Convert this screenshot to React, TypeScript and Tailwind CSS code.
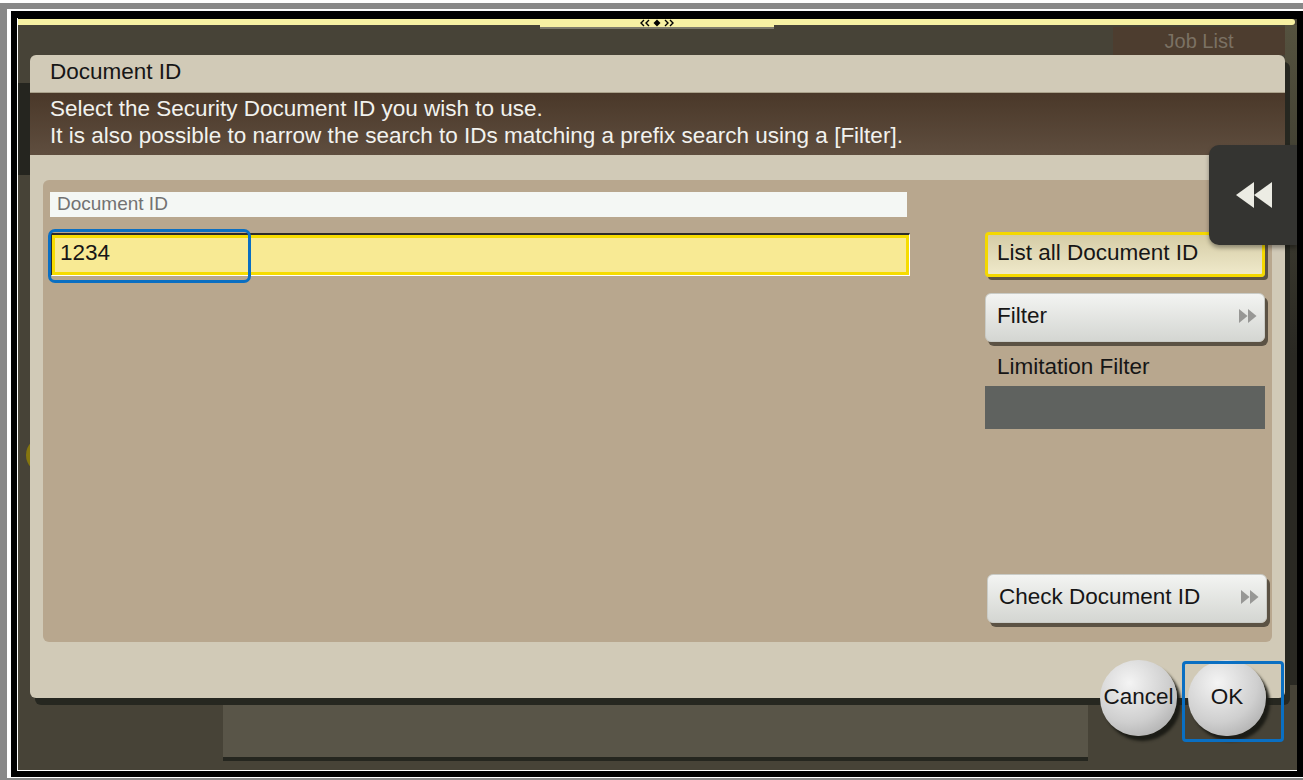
import React from 'react'

function DoubleArrow() {
  return (
    <svg width="20" height="16" viewBox="0 0 20 16" className="shrink-0">
      <polygon points="1,1 9.5,8 1,15" fill="#979795" />
      <polygon points="10,1 18.5,8 10,15" fill="#979795" />
    </svg>
  )
}

function RewindIcon() {
  return (
    <svg width="38" height="26" viewBox="0 0 38 26">
      <polygon points="19,0 19,26 1,13" fill="#ecece4" />
      <polygon points="37,0 37,26 19,13" fill="#ecece4" />
    </svg>
  )
}

function HandleIcon() {
  return (
    <svg width="36" height="8" viewBox="0 0 36 8">
      <g fill="none" stroke="#000" strokeWidth="1.4">
        <polyline points="5,1 2,4 5,7" />
        <polyline points="10,1 7,4 10,7" />
        <polyline points="26,1 29,4 26,7" />
        <polyline points="31,1 34,4 31,7" />
      </g>
      <polygon points="18,0.5 21.5,4 18,7.5 14.5,4" fill="#000" />
    </svg>
  )
}

function PanelButton({ label, arrow = false }: { label: string; arrow?: boolean }) {
  return (
    <div className="flex h-[49px] w-[280px] items-center justify-between rounded-[6px] border border-[#c9cbc6] bg-gradient-to-b from-[#f3f4f2] to-[#d4d6d2] pb-[4px] pl-[11px] pr-[6px] shadow-[3px_4px_0_#5b5244]">
      <span>{label}</span>
      {arrow && <DoubleArrow />}
    </div>
  )
}

export default function App() {
  return (
    <div className="h-[780px] w-[1303px] overflow-hidden border-t-[3px] border-white bg-[#888888] pb-[2px] pl-[7px] pt-[6px] font-['Liberation_Sans',Arial,sans-serif] text-[22.5px] text-[#161616]">
      <div className="h-full border-b border-l-[4px] border-t-[2px] border-white bg-black pb-[6px] pl-[6px] pr-[6px] pt-[7px]">
        <div className="relative flex h-full flex-col overflow-hidden border-b border-l border-white bg-[#474337]">
          {/* top strip */}
          <div className="flex h-[7px] items-start border-t border-black">
            <div className="h-[6px] flex-1 bg-[#f7f1a3]" />
            <div className="flex h-[10px] w-[234px] items-start justify-center border-b-2 border-[#7e7b6c] bg-[#f7f1a3]">
              <HandleIcon />
            </div>
            <div className="mr-[2px] h-[6px] flex-1 rounded-r-[3px] bg-[#f7f1a3]" />
          </div>

          {/* background screen */}
          <div className="ml-auto mr-[12px] mt-[2px] flex h-[28px] w-[172px] items-center justify-center bg-[#4d3d2f] text-[20px] text-[#7b7163]">
            Job List
          </div>
          <div className="mt-[28px] h-[92px] bg-[#25251f]" />
          <div className="mb-[9px] ml-[205px] mt-auto h-[63px] w-[865px] border-b-[4px] border-[#25261f] bg-[#595548]" />

          <div className="absolute left-[8px] top-[419px] h-[36px] w-[36px] rounded-full bg-[#85760f]" />
          <div className="absolute right-0 top-[7px] h-[660px] w-[12px] bg-gradient-to-b from-[#55523f] via-[#2a2923] to-[#2a2923]" />

          {/* dialog */}
          <div className="absolute left-[12px] top-[37px] flex h-[643px] w-[1255px] flex-col rounded-[6px] bg-[#d1cab7] shadow-[5px_7px_0_#262720]">
            <div className="flex h-[38px] items-center border-b border-[#aaa18b] pb-[3px] pl-[20px]">
              Document ID
            </div>
            <div className="h-[62px] bg-gradient-to-b from-[#4a3829] to-[#5f4e3f] pl-[20px] pt-[2px] leading-[27px] text-[#f2f2ee]">
              <div>Select the Security Document ID you wish to use.</div>
              <div>It is also possible to narrow the search to IDs matching a prefix search using a [Filter].</div>
            </div>

            <div className="mx-[13px] mt-[25px] flex h-[462px] rounded-[6px] bg-[#b8a78e]">
              <div className="flex flex-col pl-[7px] pt-[12px]">
                <div className="flex h-[25px] w-[857px] items-center bg-[#f4f7f4] pl-[7px] text-[19px] text-[#727272]">
                  Document ID
                </div>
                <div className="mt-[16px] h-[43px] w-[860px] border-b border-l-2 border-r border-t-2 border-b-white border-l-[#2b2b2b] border-r-white border-t-[#2b2b2b]">
                  <div className="flex h-full items-center border-[3px] border-[#f6dc00] bg-[#f8ea94] pb-[4px] pl-[5px]">
                    1234
                  </div>
                </div>
              </div>

              <div className="ml-auto mr-[5px] flex w-[282px] flex-col pt-[52px]">
                <div className="flex h-[45px] w-[280px] items-center rounded-[4px] border-[3px] border-[#f4d800] bg-gradient-to-b from-[#d5cca6] to-[#efe9ca] pb-[3px] pl-[9px] shadow-[3px_3px_0_#5b5244]">
                  List all Document ID
                </div>
                <div className="mt-[16px]">
                  <PanelButton label="Filter" arrow />
                </div>
                <div className="ml-[12px] mt-[12px] leading-[26px]">Limitation Filter</div>
                <div className="mt-[6px] h-[43px] w-[280px] bg-[#5f625f]" />
                <div className="mb-[19px] ml-[2px] mt-auto">
                  <PanelButton label="Check Document ID" arrow />
                </div>
              </div>
            </div>
          </div>

          {/* focus frame on input */}
          <div className="absolute left-[30px] top-[211px] h-[54px] w-[203px] rounded-[7px] border-[3px] border-[#0a6fc2]" />

          {/* side panel tab */}
          <div className="absolute right-0 top-[127px] flex h-[100px] w-[88px] items-center rounded-l-[10px] bg-[#343431] pl-[26px] shadow-[0_3px_4px_rgba(0,0,0,0.35)]">
            <RewindIcon />
          </div>

          {/* round buttons */}
          <div className="absolute left-[1082px] top-[642px] flex h-[76px] w-[77px] items-center justify-center rounded-full bg-[radial-gradient(circle_at_38%_30%,#f4f4f4,#cfcfcf_55%,#9d9d9d)] pb-[2px] shadow-[4px_5px_3px_#1c1c16]">
            Cancel
          </div>
          <div className="absolute left-[1170px] top-[642px] flex h-[76px] w-[78px] items-center justify-center rounded-full bg-[radial-gradient(circle_at_38%_30%,#f4f4f4,#cfcfcf_55%,#9d9d9d)] pb-[2px] shadow-[4px_5px_3px_#1c1c16]">
            OK
          </div>
          <div className="absolute left-[1164px] top-[643px] h-[81px] w-[102px] rounded-[4px] border-[3px] border-[#0a6fc2]" />
        </div>
      </div>
    </div>
  )
}
